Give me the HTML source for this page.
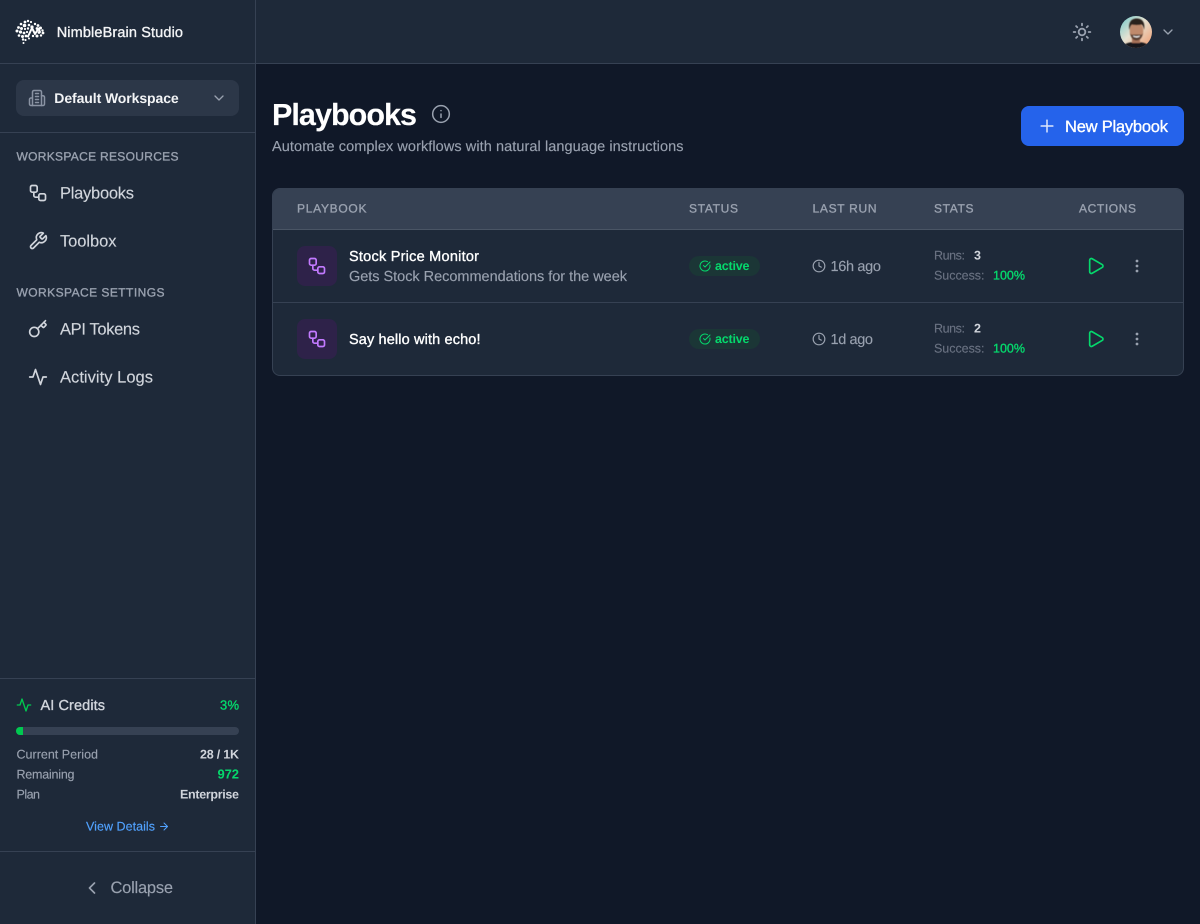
<!DOCTYPE html>
<html lang="en">
<head>
<meta charset="utf-8">
<title>Playbooks - NimbleBrain Studio</title>
<style>
html,body{margin:0;padding:0;background:#101828;}
body{position:relative;width:1200px;height:924px;overflow:hidden;font-family:"Liberation Sans",Arial,sans-serif;}
.box{position:absolute;box-sizing:border-box;}
svg.layer{position:absolute;left:0;top:0;}
text{font-family:"Liberation Sans",Arial,sans-serif;text-rendering:geometricPrecision;}
.m{stroke:currentColor;stroke-width:.34px;}
.r{stroke:currentColor;stroke-width:.14px;}
.i{fill:none;stroke:currentColor;stroke-linecap:round;stroke-linejoin:round;stroke-width:2;}
</style>
</head>
<body>
<header class="box" style="left:256px;top:0;width:944px;height:64px;background:#1e2939;border-bottom:1px solid #364153;"></header>
<aside class="box" style="left:0;top:0;width:256px;height:924px;background:#1e2939;border-right:1px solid #364153;">
  <div class="box" style="left:0;top:63px;width:255px;height:1px;background:#364153;"></div>
  <div class="box" style="left:16px;top:80px;width:223px;height:36px;border-radius:8px;background:#2c3748;"></div>
  <div class="box" style="left:0;top:132px;width:255px;height:1px;background:#364153;"></div>
  <div class="box" style="left:0;top:678px;width:255px;height:1px;background:#364153;"></div>
  <div class="box" style="left:16px;top:727px;width:223px;height:8px;border-radius:4px;background:#364153;overflow:hidden;"><div style="width:7px;height:8px;background:#00c950;"></div></div>
  <div class="box" style="left:0;top:851px;width:255px;height:1px;background:#364153;"></div>
</aside>
<main>
  <div class="box" style="left:1021px;top:106px;width:163px;height:40px;border-radius:8px;background:#2563eb;"></div>
  <div class="box" style="left:272px;top:188px;width:912px;height:188px;border-radius:8px;background:#1e2939;border:1px solid #364153;overflow:hidden;">
    <div class="box" style="left:0;top:0;width:910px;height:41px;background:#364153;border-bottom:1px solid #4a5565;"></div>
    <div class="box" style="left:0;top:113px;width:910px;height:1px;background:#364153;"></div>
  </div>
  <div class="box" style="left:297px;top:246px;width:40px;height:40px;border-radius:8px;background:#2e2249;"></div>
  <div class="box" style="left:297px;top:319px;width:40px;height:40px;border-radius:8px;background:#2e2249;"></div>
  <div class="box" style="left:689px;top:256px;width:71px;height:20px;border-radius:10px;background:#1b3636;"></div>
  <div class="box" style="left:689px;top:329px;width:71px;height:20px;border-radius:10px;background:#1b3636;"></div>
</main>

<svg class="layer" width="1200" height="924" viewBox="0 0 1200 924" xmlns="http://www.w3.org/2000/svg">
<defs>
  <clipPath id="av"><circle cx="1136" cy="32" r="16"/></clipPath>
  <linearGradient id="avg" x1="0" y1="0" x2="1" y2="1">
    <stop offset="0" stop-color="#6fc9cb"/><stop offset=".45" stop-color="#e6e2d2"/><stop offset="1" stop-color="#f0996c"/>
  </linearGradient>
  <filter id="soft" x="-10%" y="-10%" width="120%" height="120%"><feGaussianBlur stdDeviation=".45"/></filter>
</defs>

<!-- logo -->
<g fill="#fff">
  <circle cx="25" cy="22" r="1.4"/><circle cx="28" cy="21" r="1.2"/><circle cx="31" cy="22" r="1.1"/>
  <circle cx="21" cy="24" r="1.3"/><circle cx="24.5" cy="25.500" r="1.8"/><circle cx="29" cy="25" r="1.3"/><circle cx="35" cy="24" r="1.200"/><circle cx="38" cy="25.500" r="1.400"/>
  <circle cx="18.500" cy="27.500" r="1.400"/><circle cx="21.500" cy="28.500" r="1.500"/><circle cx="25" cy="29" r="1.100"/><circle cx="28" cy="28.500" r="1.200"/><circle cx="32" cy="27" r="1.600"/><circle cx="37" cy="28.500" r="1.400"/><circle cx="40.500" cy="28" r="1.500"/><circle cx="42.500" cy="30.500" r="1.200"/>
  <circle cx="17" cy="31" r="1.500"/><circle cx="20.500" cy="32" r="1.600"/><circle cx="24" cy="33" r="1.400"/><circle cx="27" cy="32" r="1.100"/><circle cx="39" cy="32.500" r="1.400"/><circle cx="43" cy="33" r="1.400"/>
  <circle cx="19" cy="35.500" r="1.300"/><circle cx="22.500" cy="36.500" r="1.500"/><circle cx="26" cy="36" r="1.400"/><circle cx="33" cy="36" r="1.200"/><circle cx="37" cy="36" r="1.500"/><circle cx="41" cy="35.500" r="1.200"/>
  <circle cx="23" cy="39.500" r="1.200"/><circle cx="25.500" cy="40" r="1.100"/><circle cx="23.500" cy="43" r="1"/><circle cx="29" cy="38.500" r="1"/>
</g>
<polyline points="28,36.500 32,28 35,34 38.500,28.500 40,32" fill="none" stroke="#fff" stroke-width="2" stroke-linecap="round" stroke-linejoin="round"/>

<text x="56.700" y="37" font-size="14.500" fill="#f3f4f6" color="#f3f4f6" class="m" textLength="126.300">NimbleBrain Studio</text>

<!-- workspace selector -->
<g transform="translate(28 89) scale(.75)" class="i" color="#8a93a3"><path d="M6 22V4a2 2 0 0 1 2-2h8a2 2 0 0 1 2 2v18Z"/><path d="M6 12H4a2 2 0 0 0-2 2v6a2 2 0 0 0 2 2h2"/><path d="M18 9h2a2 2 0 0 1 2 2v9a2 2 0 0 1-2 2h-2"/><path d="M10 6h4M10 10h4M10 14h4M10 18h4"/></g>
<text x="54.300" y="103" font-size="14" font-weight="700" fill="#f3f4f6" textLength="124.400">Default Workspace</text>
<g transform="translate(211 90) scale(.667)" class="i" color="#99a1af"><path d="m6 9 6 6 6-6"/></g>

<!-- nav -->
<text x="16.500" y="160.500" font-size="12" fill="#99a1af" color="#99a1af" class="m" textLength="162">WORKSPACE RESOURCES</text>
<g transform="translate(28 183) scale(.8333)" class="i" color="#d1d5dc"><rect x="3" y="3" width="8" height="8" rx="2"/><path d="M7 11v4a2 2 0 0 0 2 2h4"/><rect x="13" y="13" width="8" height="8" rx="2"/></g>
<text x="60" y="198.500" font-size="16.500" fill="#d1d5dc" color="#d1d5dc" class="r" textLength="74">Playbooks</text>
<g transform="translate(28 231) scale(.8333)" class="i" color="#d1d5dc"><path d="M14.700 6.300a1 1 0 0 0 0 1.400l1.600 1.600a1 1 0 0 0 1.400 0l3.770-3.770a6 6 0 0 1-7.940 7.940l-6.910 6.910a2.120 2.120 0 0 1-3-3l6.910-6.910a6 6 0 0 1 7.940-7.940l-3.760 3.760z"/></g>
<text x="60" y="246.500" font-size="16.500" fill="#d1d5dc" color="#d1d5dc" class="r" textLength="56.500">Toolbox</text>
<text x="16.500" y="296.500" font-size="12" fill="#99a1af" color="#99a1af" class="m" textLength="148">WORKSPACE SETTINGS</text>
<g transform="translate(28 319) scale(.8333)" class="i" color="#d1d5dc"><path d="m15.500 7.500 2.300 2.300a1 1 0 0 0 1.400 0l2.100-2.100a1 1 0 0 0 0-1.400L19 4"/><path d="m21 2-9.600 9.600"/><circle cx="7.500" cy="15.500" r="5.500"/></g>
<text x="60" y="334.500" font-size="16.500" fill="#d1d5dc" color="#d1d5dc" class="r" textLength="80">API Tokens</text>
<g transform="translate(28 367) scale(.8333)" class="i" color="#d1d5dc"><path d="M22 12h-4l-3 9L9 3l-3 9H2"/></g>
<text x="60" y="382.500" font-size="16.500" fill="#d1d5dc" color="#d1d5dc" class="r" textLength="93">Activity Logs</text>

<!-- credits -->
<g transform="translate(16 697) scale(.6667)" class="i" color="#00c950"><path d="M22 12h-4l-3 9L9 3l-3 9H2"/></g>
<text x="40.500" y="710" font-size="14.500" fill="#d1d5dc" color="#d1d5dc" class="m" textLength="64.500">AI Credits</text>
<text x="220" y="709.500" font-size="13" fill="#05d86c" color="#05d86c" class="m" textLength="19">3%</text>
<text x="16.500" y="758.500" font-size="12.500" fill="#99a1af" color="#99a1af" class="r" textLength="81.500">Current Period</text>
<text x="200" y="758.500" font-size="12.500" font-weight="700" fill="#d1d5dc" textLength="39">28 / 1K</text>
<text x="16.500" y="778.500" font-size="12.500" fill="#99a1af" color="#99a1af" class="r" textLength="58">Remaining</text>
<text x="217.500" y="778.500" font-size="13" font-weight="700" fill="#05d86c" textLength="21.500">972</text>
<text x="16.500" y="798.500" font-size="12.500" fill="#99a1af" color="#99a1af" class="r" textLength="23.500">Plan</text>
<text x="180" y="798.500" font-size="12.500" font-weight="700" fill="#d1d5dc" textLength="59">Enterprise</text>
<text x="86" y="830.500" font-size="12.500" fill="#51a2ff" color="#51a2ff" class="r" textLength="69">View Details</text>
<g transform="translate(158 820.500) scale(.5)" class="i" color="#51a2ff"><path d="M5 12h14"/><path d="m12 5 7 7-7 7"/></g>
<g transform="translate(82 878) scale(.8333)" class="i" color="#99a1af"><path d="m15 18-6-6 6-6"/></g>
<text x="110.500" y="893" font-size="16.500" fill="#99a1af" color="#99a1af" class="r" textLength="62.500">Collapse</text>

<!-- top right -->
<g transform="translate(1072 22) scale(.8333)" class="i" color="#99a1af" style="stroke-width:2.200"><circle cx="12" cy="12" r="4"/><path d="M12 2v2M12 20v2M4.930 4.930l1.410 1.410M17.660 17.660l1.410 1.410M2 12h2M20 12h2M6.340 17.660l-1.410 1.410M19.070 4.930l-1.410 1.410"/></g>
<g clip-path="url(#av)">
  <rect x="1120" y="16" width="32" height="32" fill="url(#avg)"/>
  <g filter="url(#soft)">
    <path d="M1121 50c1-6 7-8 15-8s14 2 15 8z" fill="#17171a"/>
    <rect x="1132" y="37" width="8" height="6" fill="#a8725a"/>
    <ellipse cx="1136.500" cy="31" rx="6.800" ry="9" fill="#bf8a6c"/>
    <path d="M1129.500 30c-1.500-7 1.500-11.500 7-11.500s9 3.500 7.500 11.500c-.5-2.500-1-4.500-2.500-5.500-3 .8-7 .8-9.500 0-1.500 1-2 3-2.500 5.500z" fill="#2b201c"/>
    <path d="M1130 33c.8 5 3.500 7.500 6.500 7.500s5.700-2.500 6.500-7.500c-.8 1.500-1.800 2-3 1.500h-7c-1.200.5-2.200 0-3-1.500z" fill="#5a4032"/>
    <path d="M1133 35.500c2.300 1 4.700 1 7 0-.5 2.600-6.500 2.600-7 0z" fill="#fff"/>
  </g>
</g>
<g transform="translate(1160 24) scale(.6667)" class="i" color="#99a1af"><path d="m6 9 6 6 6-6"/></g>

<!-- title -->
<text x="272" y="125" font-size="30.500" font-weight="700" fill="#fff" color="#fff" class="r" textLength="145">Playbooks</text>
<g transform="translate(431 104) scale(.8333)" class="i" color="#99a1af" style="stroke-width:1.800"><circle cx="12" cy="12" r="10"/><path d="M12 16v-4"/><path d="M12 8h.01"/></g>
<text x="272" y="151" font-size="14.500" fill="#99a1af" color="#99a1af" class="r" textLength="411.500">Automate complex workflows with natural language instructions</text>

<!-- button -->
<g transform="translate(1037 116) scale(.8333)" class="i" color="#fff" style="opacity:.85;stroke-width:1.800"><path d="M5 12h14"/><path d="M12 5v14"/></g>
<text x="1065" y="132" font-size="16.500" fill="#fff" color="#fff" class="m" textLength="103">New Playbook</text>

<!-- table header -->
<text x="297" y="212.500" font-size="12" fill="#99a1af" color="#99a1af" class="m" textLength="69.500">PLAYBOOK</text>
<text x="689" y="212.500" font-size="12" fill="#99a1af" color="#99a1af" class="m" textLength="49">STATUS</text>
<text x="812.500" y="212.500" font-size="12" fill="#99a1af" color="#99a1af" class="m" textLength="64">LAST RUN</text>
<text x="934" y="212.500" font-size="12" fill="#99a1af" color="#99a1af" class="m" textLength="39.500">STATS</text>
<text x="1079" y="212.500" font-size="12" fill="#99a1af" color="#99a1af" class="m" textLength="57">ACTIONS</text>

<!-- row 1 -->
<g transform="translate(307 256) scale(.8333)" class="i" color="#c27aff"><rect x="3" y="3" width="8" height="8" rx="2"/><path d="M7 11v4a2 2 0 0 0 2 2h4"/><rect x="13" y="13" width="8" height="8" rx="2"/></g>
<text x="349" y="261" font-size="14.500" fill="#fff" color="#fff" class="m" textLength="130">Stock Price Monitor</text>
<text x="349" y="281" font-size="14.500" fill="#99a1af" color="#99a1af" class="r" textLength="278">Gets Stock Recommendations for the week</text>
<g transform="translate(699 260) scale(.5)" class="i" color="#05d86c"><path d="M21.801 10A10 10 0 1 1 17 3.335"/><path d="m9 11 3 3L22 4"/></g>
<text x="715" y="270" font-size="12.500" font-weight="700" fill="#05d86c" textLength="34.500">active</text>
<g transform="translate(812 259) scale(.5833)" class="i" color="#99a1af"><circle cx="12" cy="12" r="10"/><polyline points="12 6 12 12 16 14"/></g>
<text x="830.500" y="271" font-size="14.500" fill="#99a1af" color="#99a1af" class="r" textLength="50.500">16h ago</text>
<text x="934" y="259.500" font-size="12.500" fill="#6a7282" color="#6a7282" class="r" textLength="31">Runs:</text>
<text x="974" y="259.500" font-size="12.500" font-weight="700" fill="#d1d5dc" textLength="7">3</text>
<text x="934" y="279.500" font-size="12.500" fill="#6a7282" color="#6a7282" class="r" textLength="50.500">Success:</text>
<text x="993" y="279.500" font-size="12.500" fill="#05d86c" color="#05d86c" class="m" textLength="32">100%</text>
<g transform="translate(1085.500 256) scale(.8333)" class="i" color="#05d86c"><path d="M5 5a2 2 0 0 1 3.008-1.728l11.997 6.998a2 2 0 0 1 .003 3.458l-12 7A2 2 0 0 1 5 19z"/></g>
<g fill="#99a1af"><circle cx="1137" cy="261" r="1.400"/><circle cx="1137" cy="266" r="1.400"/><circle cx="1137" cy="271" r="1.400"/></g>

<!-- row 2 -->
<g transform="translate(307 329) scale(.8333)" class="i" color="#c27aff"><rect x="3" y="3" width="8" height="8" rx="2"/><path d="M7 11v4a2 2 0 0 0 2 2h4"/><rect x="13" y="13" width="8" height="8" rx="2"/></g>
<text x="349" y="344" font-size="14.500" fill="#fff" color="#fff" class="m" textLength="131.500">Say hello with echo!</text>
<g transform="translate(699 333) scale(.5)" class="i" color="#05d86c"><path d="M21.801 10A10 10 0 1 1 17 3.335"/><path d="m9 11 3 3L22 4"/></g>
<text x="715" y="343" font-size="12.500" font-weight="700" fill="#05d86c" textLength="34.500">active</text>
<g transform="translate(812 332) scale(.5833)" class="i" color="#99a1af"><circle cx="12" cy="12" r="10"/><polyline points="12 6 12 12 16 14"/></g>
<text x="830.500" y="344" font-size="14.500" fill="#99a1af" color="#99a1af" class="r" textLength="42.500">1d ago</text>
<text x="934" y="332.500" font-size="12.500" fill="#6a7282" color="#6a7282" class="r" textLength="31">Runs:</text>
<text x="974" y="332.500" font-size="12.500" font-weight="700" fill="#d1d5dc" textLength="6.500">2</text>
<text x="934" y="352.500" font-size="12.500" fill="#6a7282" color="#6a7282" class="r" textLength="50.500">Success:</text>
<text x="993" y="352.500" font-size="12.500" fill="#05d86c" color="#05d86c" class="m" textLength="32">100%</text>
<g transform="translate(1085.500 329) scale(.8333)" class="i" color="#05d86c"><path d="M5 5a2 2 0 0 1 3.008-1.728l11.997 6.998a2 2 0 0 1 .003 3.458l-12 7A2 2 0 0 1 5 19z"/></g>
<g fill="#99a1af"><circle cx="1137" cy="334" r="1.400"/><circle cx="1137" cy="339" r="1.400"/><circle cx="1137" cy="344" r="1.400"/></g>
</svg>
</body>
</html>
